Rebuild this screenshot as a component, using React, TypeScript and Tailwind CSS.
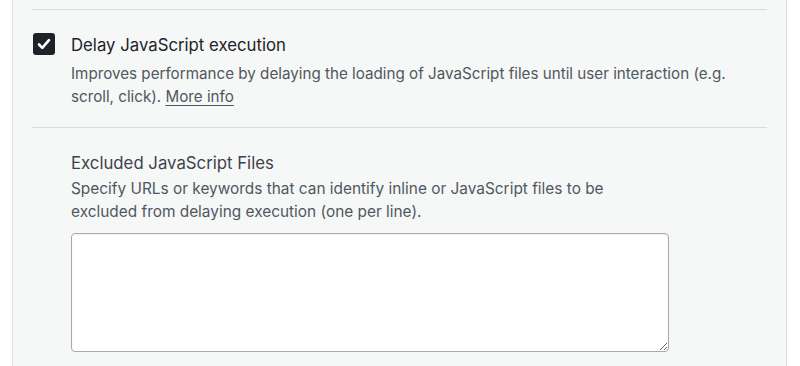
export default function App() {
  return (
    <div
      className="h-[366px] w-[800px] overflow-hidden bg-white pl-[12px]"
      style={{ fontFamily: 'Inter, "Liberation Sans", sans-serif' }}
    >
      <div className="h-full w-[775px] border-x border-[#dcdcde] bg-[#f6f7f7] pl-[19px] pr-[19px] pt-[9px]">
        {/* Delay JS option */}
        <div className="border-t border-[#dcdcde]">
          <div className="mt-[23px] flex items-start gap-[16px] pl-[1px]">
            <div className="flex h-[22px] w-[22px] shrink-0 items-center justify-center rounded-[3px] bg-[#1d2327]">
              <svg width="14" height="12" viewBox="0 0 14 12" fill="none">
                <path
                  d="M2 6.5L5.3 9.8L12 2.2"
                  stroke="white"
                  strokeWidth="2.6"
                  strokeLinecap="round"
                  strokeLinejoin="round"
                />
              </svg>
            </div>
            <div className="mt-[1px]">
              <div className="text-[16.75px] leading-[22px] text-[#1d2327]">Delay JavaScript execution</div>
              <p className="mt-[6px] text-[15.2px] leading-[23px] text-[#50575e]">
                Improves performance by delaying the loading of JavaScript files until user interaction (e.g.
                <br />
                scroll, click).{' '}
                <a href="#" className="underline underline-offset-[3px]">
                  More info
                </a>
              </p>
            </div>
          </div>
        </div>

        {/* Excluded files */}
        <div className="mt-[19px] border-t border-[#dcdcde] pl-[39px] pt-[24px]">
          <div className="text-[16.75px] leading-[22px] text-[#3c434a]">Excluded JavaScript Files</div>
          <p className="mt-[3px] text-[15.4px] leading-[23px] text-[#50575e]">
            Specify URLs or keywords that can identify inline or JavaScript files to be
            <br />
            excluded from delaying execution (one per line).
          </p>
          <textarea className="mt-[10px] block h-[119px] w-[598px] rounded-[4px] border border-[#a7aaad] bg-white shadow-[inset_0_1px_2px_rgba(0,0,0,0.07)] outline-none" />
        </div>
      </div>
    </div>
  );
}
